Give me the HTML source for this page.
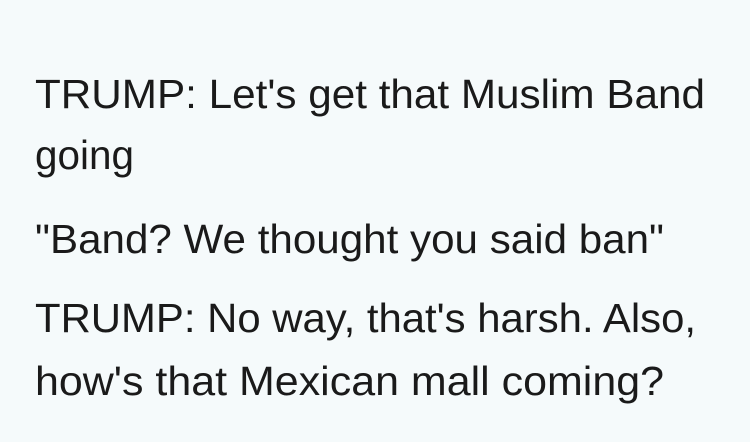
<!DOCTYPE html>
<html><head><meta charset="utf-8"><style>
html,body{margin:0;padding:0;background:#f5fafb;}
svg{display:block}
text{font-family:"Liberation Sans",Arial,sans-serif;font-size:41px;fill:#1a1a1a;}
</style></head><body>
<svg width="750" height="442" xmlns="http://www.w3.org/2000/svg">
<rect width="750" height="442" fill="#f5fafb"/>
<text x="35" y="108" textLength="670" lengthAdjust="spacingAndGlyphs">TRUMP: Let's get that Muslim Band</text>
<text x="35" y="169" textLength="99" lengthAdjust="spacingAndGlyphs">going</text>
<text x="35" y="253" textLength="629" lengthAdjust="spacingAndGlyphs">"Band? We thought you said ban"</text>
<text x="35" y="332" textLength="661" lengthAdjust="spacingAndGlyphs">TRUMP: No way, that's harsh. Also,</text>
<text x="35" y="395" textLength="629" lengthAdjust="spacingAndGlyphs">how's that Mexican mall coming?</text>
</svg>
</body></html>
